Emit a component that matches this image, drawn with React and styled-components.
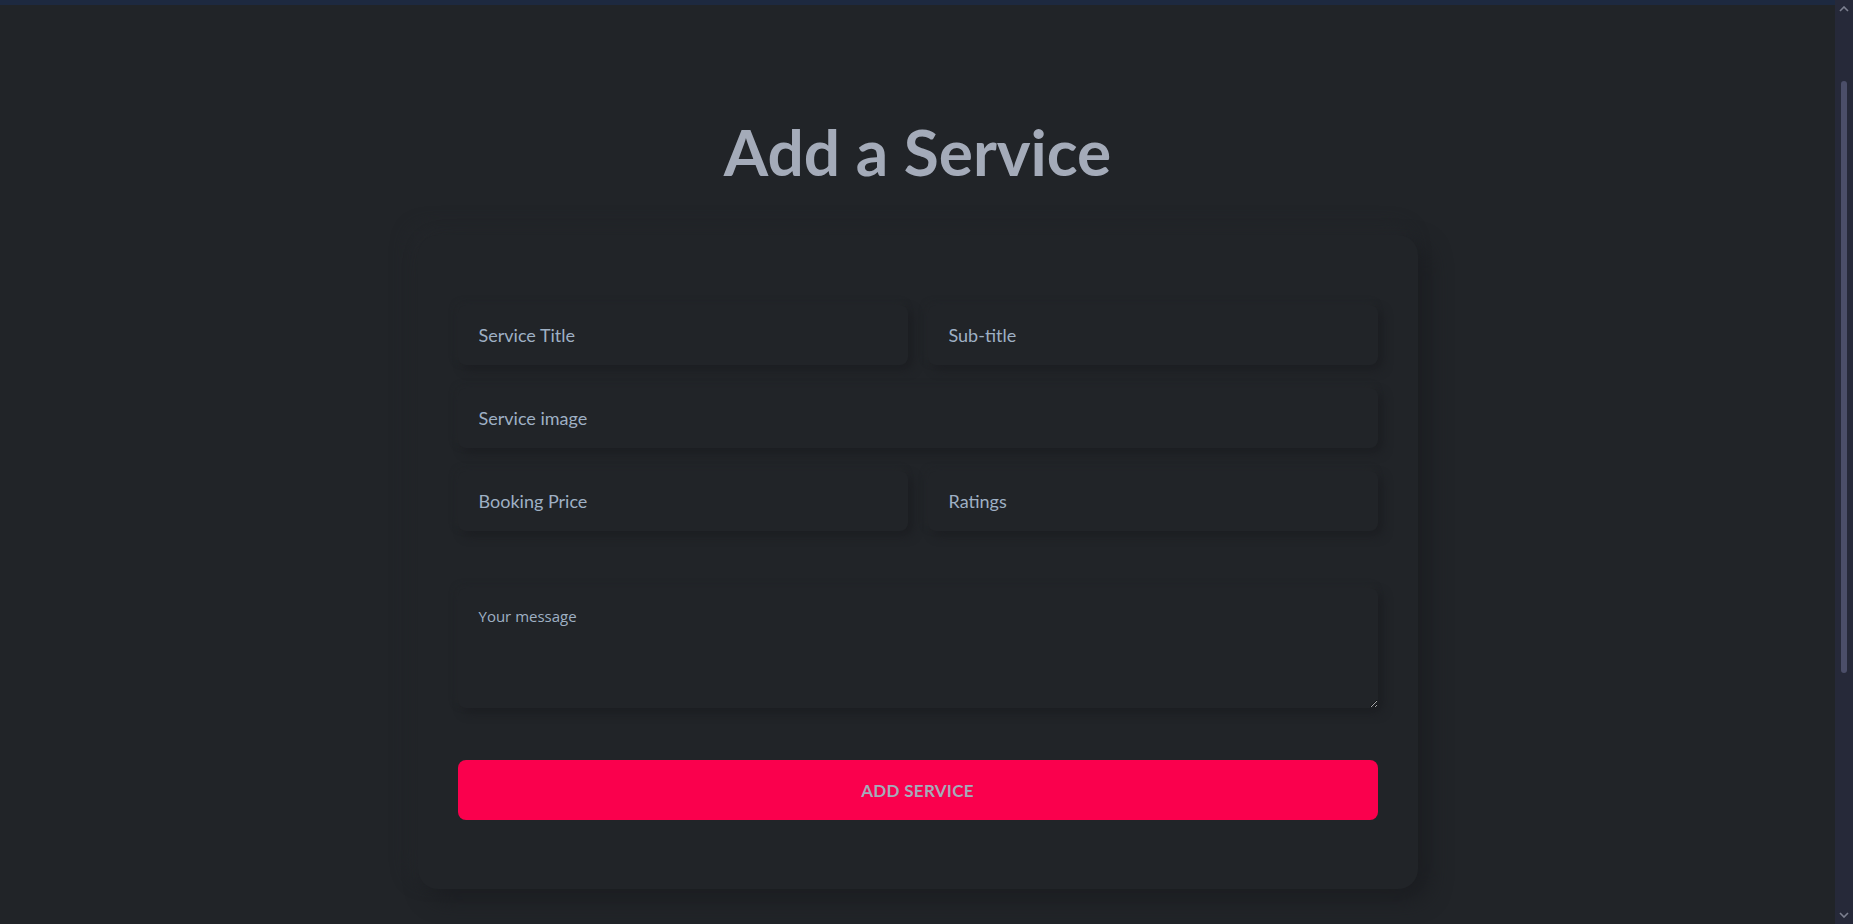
import React from 'react';
import styled, { createGlobalStyle } from 'styled-components';

const GlobalStyle = createGlobalStyle`
  html, body {
    margin: 0;
    padding: 0;
    height: 100%;
    overflow: hidden;
    background: #212428;
  }
  #root {
    height: 100%;
  }
  * {
    box-sizing: border-box;
  }
`;

const Shell = styled.div`
  display: flex;
  height: 100vh;
  background: #212428;
`;

const Page = styled.main`
  flex: 1;
  display: flex;
  flex-direction: column;
  align-items: center;
`;

const NavEdge = styled.div`
  align-self: stretch;
  height: 5px;
  background: #1d2940;
`;

const Title = styled.h1`
  margin: 115px 0 0;
  font-family: 'Lato', 'Liberation Sans', sans-serif;
  font-size: 64px;
  line-height: 64px;
  font-weight: 700;
  color: #a4abb9;
`;

const Card = styled.form`
  width: 1000px;
  margin-top: 51px;
  padding: 70px 40px 69px;
  border-radius: 20px;
  background: #212428;
  box-shadow: 10px 10px 22px #1b1d21, -8px -8px 18px #24272b;
  display: flex;
  flex-direction: column;
`;

const FieldGrid = styled.div`
  display: grid;
  grid-template-columns: 1fr 1fr;
  column-gap: 20px;
  row-gap: 23px;
`;

const Field = styled.input`
  grid-column: ${({ $wide }) => ($wide ? '1 / -1' : 'auto')};
  height: 60px;
  padding: 0 21px;
  border: none;
  outline: none;
  border-radius: 8px;
  background: #212428;
  box-shadow: 5px 5px 10px #1c1e22, -2px -2px 6px #24272b;
  font-family: 'Lato', 'Liberation Sans', sans-serif;
  font-size: 18px;
  color: #c4cfde;

  &::placeholder {
    color: #9fb0c4;
  }
`;

const Message = styled.textarea`
  margin-top: 57px;
  height: 120px;
  padding: 18px 21px;
  border: none;
  outline: none;
  border-radius: 8px;
  background: #212428;
  box-shadow: 5px 5px 10px #1c1e22, -2px -2px 6px #24272b;
  font-family: 'Open Sans', 'Liberation Sans', sans-serif;
  font-size: 15px;
  color: #c4cfde;

  &::placeholder {
    color: #9fb0c4;
  }
`;

const Submit = styled.button`
  margin-top: 52px;
  height: 60px;
  border: none;
  border-radius: 8px;
  background: #fa004d;
  font-family: 'Lato', 'Liberation Sans', sans-serif;
  font-size: 17px;
  font-weight: 700;
  letter-spacing: 0.3px;
  text-transform: uppercase;
  color: #a4abb9;
  cursor: pointer;
`;

const ScrollRail = styled.div`
  width: 18px;
  flex-shrink: 0;
  background: #262939;
  display: flex;
  flex-direction: column;
  align-items: center;
`;

const RailArrow = styled.div`
  height: 18px;
  display: flex;
  align-items: center;
  justify-content: center;
  margin-top: ${({ $bottom }) => ($bottom ? 'auto' : '0')};
`;

const Thumb = styled.div`
  width: 6px;
  height: 592px;
  margin-top: 63px;
  border-radius: 3px;
  background: #4b4e69;
`;

const Chevron = ({ down }) => (
  <svg width="10" height="6" viewBox="0 0 10 6">
    <path
      d={down ? 'M1 1 L5 5 L9 1' : 'M1 5 L5 1 L9 5'}
      fill="none"
      stroke="#7d8090"
      strokeWidth="1.6"
    />
  </svg>
);

const App = () => {
  return (
    <>
      <GlobalStyle />
      <Shell>
        <Page>
          <NavEdge />
          <Title>Add a Service</Title>
          <Card onSubmit={(e) => e.preventDefault()}>
            <FieldGrid>
              <Field type="text" placeholder="Service Title" />
              <Field type="text" placeholder="Sub-title" />
              <Field $wide type="text" placeholder="Service image" />
              <Field type="text" placeholder="Booking Price" />
              <Field type="text" placeholder="Ratings" />
            </FieldGrid>
            <Message placeholder="Your message" />
            <Submit type="submit">Add Service</Submit>
          </Card>
        </Page>
        <ScrollRail>
          <RailArrow>
            <Chevron />
          </RailArrow>
          <Thumb />
          <RailArrow $bottom>
            <Chevron down />
          </RailArrow>
        </ScrollRail>
      </Shell>
    </>
  );
};

export default App;
